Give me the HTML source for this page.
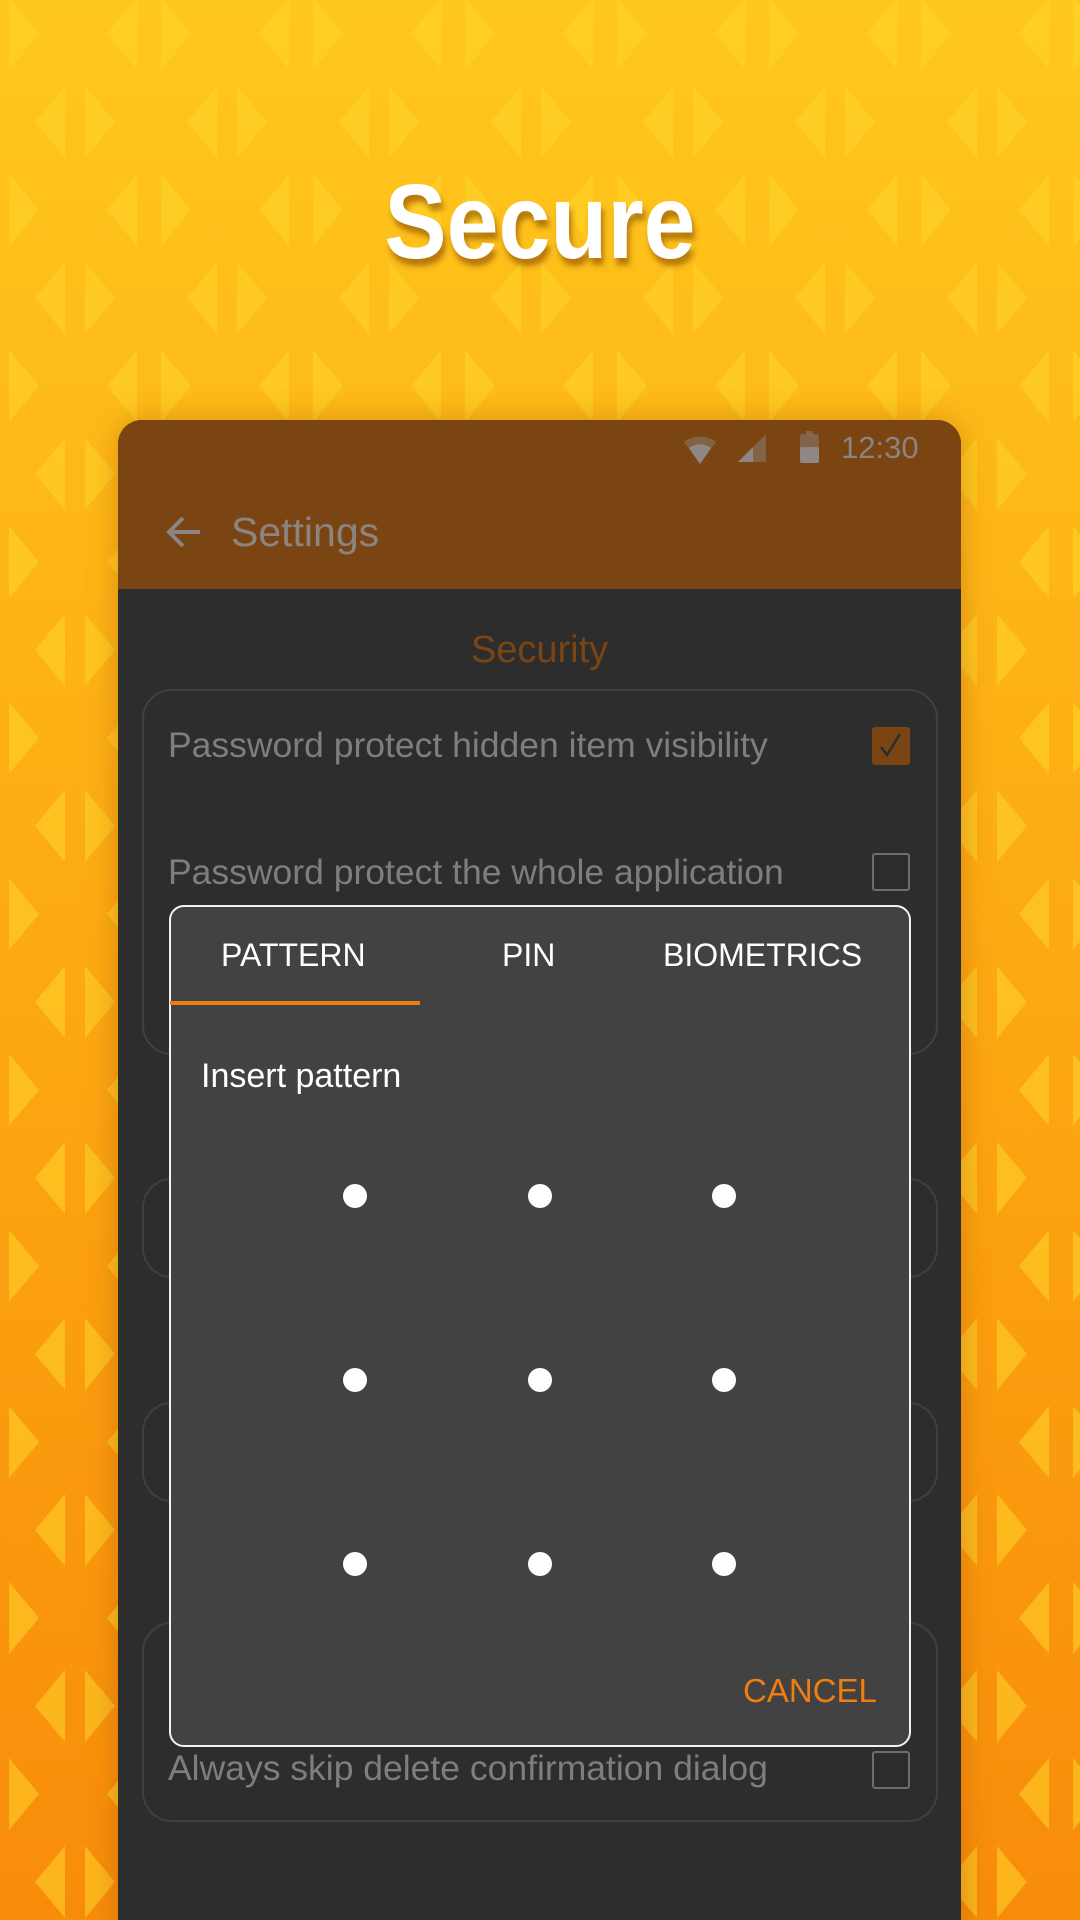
<!DOCTYPE html>
<html><head><meta charset="utf-8">
<style>
*{margin:0;padding:0;box-sizing:border-box}
html,body{width:1080px;height:1920px;overflow:hidden}
body{position:relative;font-family:"Liberation Sans",sans-serif;background:linear-gradient(#ffc81c 0%,#fdaf14 40%,#f88c0a 100%)}
#bg{position:absolute;left:0;top:0}
.title{position:absolute;left:0;width:1080px;top:162px;text-align:center;font-size:106px;font-weight:bold;color:#fff;text-shadow:3px 7px 6px rgba(120,60,0,.55);transform:scaleX(.88)}
.phone{position:absolute;left:118px;top:420px;width:843px;height:1560px;background:#2e2d2e;border-radius:24px 24px 0 0;overflow:hidden;box-shadow:0 0 30px rgba(150,70,0,.35)}
.bar{position:absolute;left:0;top:0;width:843px;height:169px;background:#7a4413}
.t{position:absolute;white-space:nowrap}
.card{position:absolute;left:24px;width:796px;border:2px solid #414041;border-radius:30px}
.cb{position:absolute;left:754px;width:38px;height:38px;border:2.5px solid #6e6d6e;border-radius:3px}
.ptxt{font-size:35.5px;color:#7f7e7f;left:50px}
.dlg{position:absolute;left:51px;top:485px;width:742px;height:842px;background:#424242;border:2px solid #f2f2f2;border-radius:15px}
.dot{position:absolute;width:24px;height:24px;border-radius:50%;background:#fff}
.tab{font-size:32px;color:#fff;top:30px}
</style></head><body>
<svg id="bg" width="1080" height="1920">
<defs><pattern id="p" width="152" height="176" patternUnits="userSpaceOnUse" x="-3" y="-10">
<g fill="#ffd52a" opacity=".55">
<polygon points="12,8 12,80 42,44"/><polygon points="68,96 68,168 38,132"/>
<polygon points="140,8 140,80 110,44"/><polygon points="88,96 88,168 118,132"/>
</g>
</pattern></defs>
<rect width="1080" height="1920" fill="url(#p)"/>
</svg>
<div class="title">Secure</div>
<div class="phone">
 <div class="bar">
  <svg class="t" style="left:562px;top:12px" width="40" height="34"><path d="M4 10 A26 26 0 0 1 36 10 L20 32 Z" fill="#8a7a6c" opacity=".55"/><path d="M9 16 A18 18 0 0 1 31 16 L20 32 Z" fill="#8e8784"/></svg>
  <svg class="t" style="left:620px;top:14px" width="30" height="30"><path d="M0 28 L28 0 L28 28 Z" fill="#8a7a6c" opacity=".6"/><path d="M0 28 L15 13 L15 28 Z" fill="#8e8784"/></svg>
  <svg class="t" style="left:682px;top:11px" width="20" height="32"><rect x="0" y="3" width="19" height="29" rx="2" fill="#8a7a6c" opacity=".6"/><rect x="6" y="0" width="7" height="4" fill="#8a7a6c" opacity=".6"/><rect x="0" y="16" width="19" height="16" rx="2" fill="#8e8784"/></svg>
  <div class="t" style="left:723px;top:10px;font-size:31px;color:#8b8480">12:30</div>
  <svg class="t" style="left:46px;top:92px" width="40" height="40"><path d="M36 20 H6 M19 6 L5 20 L19 34" stroke="#8c8480" stroke-width="4" fill="none"/></svg>
  <div class="t" style="left:113px;top:89px;font-size:41px;color:#8c8480">Settings</div>
 </div>
 <div class="t" style="left:0;width:843px;text-align:center;top:209px;font-size:38px;color:#7a4413">Security</div>
 <div class="card" style="top:269px;height:366px"></div>
 <div class="t ptxt" style="top:305px">Password protect hidden item visibility</div>
 <div class="cb" style="top:307px;background:#7a4413;border-color:#7a4413"><svg width="34" height="34" style="position:absolute;left:0;top:0"><path d="M7 18 L13 26 L26 5" stroke="#2e2d2e" stroke-width="2.5" fill="none"/></svg></div>
 <div class="t ptxt" style="top:432px">Password protect the whole application</div>
 <div class="cb" style="top:433px"></div>
 <div class="card" style="top:758px;height:100px"></div>
 <div class="card" style="top:982px;height:100px"></div>
 <div class="card" style="top:1202px;height:200px"></div>
 <div class="t ptxt" style="top:1328px">Always skip delete confirmation dialog</div>
 <div class="cb" style="top:1331px"></div>
 <div class="dlg">
  <div class="t tab" style="left:50px">PATTERN</div>
  <div class="t tab" style="left:331px">PIN</div>
  <div class="t tab" style="left:492px">BIOMETRICS</div>
  <div class="t" style="left:-1px;top:94px;width:250px;height:4px;background:#f07d10"></div>
  <div class="t" style="left:30px;top:150px;font-size:34px;color:#fff">Insert pattern</div>
 </div>
 <div class="dot" style="left:225px;top:764px"></div><div class="dot" style="left:410px;top:764px"></div><div class="dot" style="left:594px;top:764px"></div>
 <div class="dot" style="left:225px;top:948px"></div><div class="dot" style="left:410px;top:948px"></div><div class="dot" style="left:594px;top:948px"></div>
 <div class="dot" style="left:225px;top:1132px"></div><div class="dot" style="left:410px;top:1132px"></div><div class="dot" style="left:594px;top:1132px"></div>
 <div class="t" style="left:625px;top:1252px;font-size:33px;color:#f07d10">CANCEL</div>
</div>
</body></html>
